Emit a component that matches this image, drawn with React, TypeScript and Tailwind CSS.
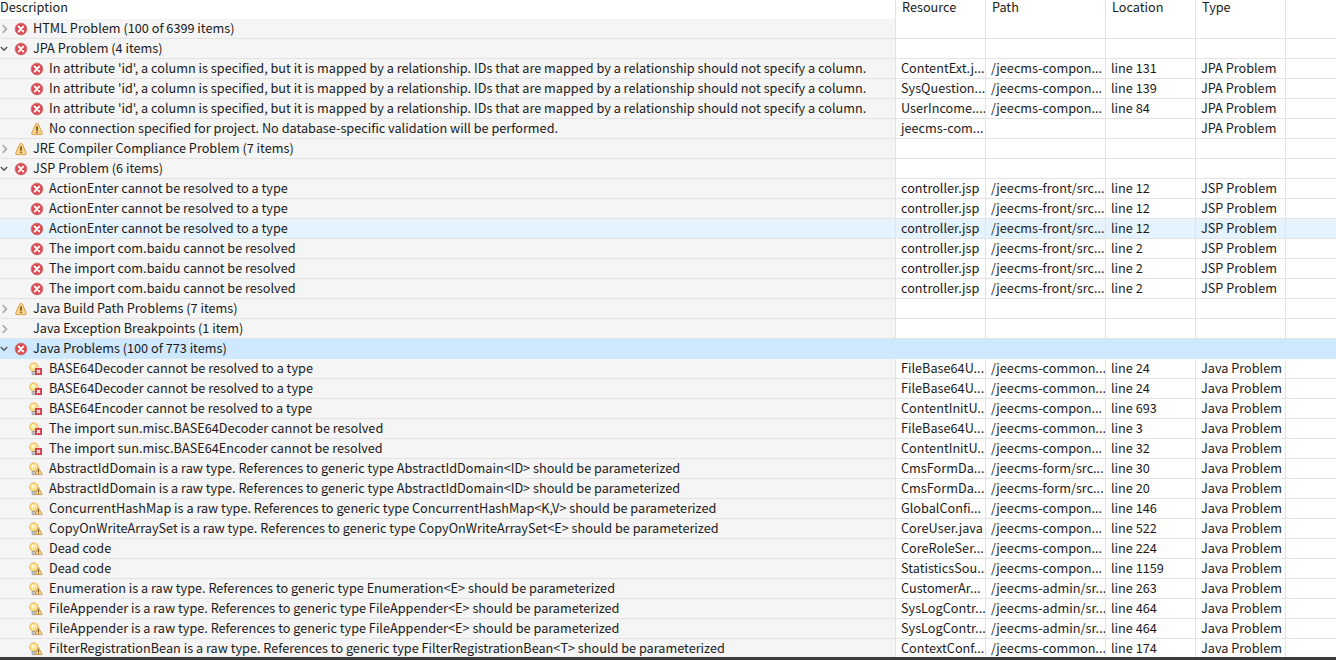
const FONT = "font-['Noto_Sans_CJK_SC','Noto_Sans',sans-serif]";

type Icon = "err" | "warn" | "none" | "berr" | "bwarn";
type Row = {
  d: string;
  icon: Icon;
  r?: string;
  p?: string;
  l?: string;
  t?: string;
  open?: boolean;
  group?: boolean;
  sel?: 1 | 2;
};

const rows: Row[] = [
  { d: "HTML Problem (100 of 6399 items)", icon: "err", group: true },
  { d: "JPA Problem (4 items)", icon: "err", group: true, open: true },
  { d: "In attribute 'id', a column is specified, but it is mapped by a relationship. IDs that are mapped by a relationship should not specify a column.", icon: "err", r: "ContentExt.j...", p: "/jeecms-compon...", l: "line 131", t: "JPA Problem" },
  { d: "In attribute 'id', a column is specified, but it is mapped by a relationship. IDs that are mapped by a relationship should not specify a column.", icon: "err", r: "SysQuestion...", p: "/jeecms-compon...", l: "line 139", t: "JPA Problem" },
  { d: "In attribute 'id', a column is specified, but it is mapped by a relationship. IDs that are mapped by a relationship should not specify a column.", icon: "err", r: "UserIncome....", p: "/jeecms-compon...", l: "line 84", t: "JPA Problem" },
  { d: "No connection specified for project. No database-specific validation will be performed.", icon: "warn", r: "jeecms-com...", t: "JPA Problem" },
  { d: "JRE Compiler Compliance Problem (7 items)", icon: "warn", group: true },
  { d: "JSP Problem (6 items)", icon: "err", group: true, open: true },
  { d: "ActionEnter cannot be resolved to a type", icon: "err", r: "controller.jsp", p: "/jeecms-front/src...", l: "line 12", t: "JSP Problem" },
  { d: "ActionEnter cannot be resolved to a type", icon: "err", r: "controller.jsp", p: "/jeecms-front/src...", l: "line 12", t: "JSP Problem" },
  { d: "ActionEnter cannot be resolved to a type", icon: "err", r: "controller.jsp", p: "/jeecms-front/src...", l: "line 12", t: "JSP Problem", sel: 1 },
  { d: "The import com.baidu cannot be resolved", icon: "err", r: "controller.jsp", p: "/jeecms-front/src...", l: "line 2", t: "JSP Problem" },
  { d: "The import com.baidu cannot be resolved", icon: "err", r: "controller.jsp", p: "/jeecms-front/src...", l: "line 2", t: "JSP Problem" },
  { d: "The import com.baidu cannot be resolved", icon: "err", r: "controller.jsp", p: "/jeecms-front/src...", l: "line 2", t: "JSP Problem" },
  { d: "Java Build Path Problems (7 items)", icon: "warn", group: true },
  { d: "Java Exception Breakpoints (1 item)", icon: "none", group: true },
  { d: "Java Problems (100 of 773 items)", icon: "err", group: true, open: true, sel: 2 },
  { d: "BASE64Decoder cannot be resolved to a type", icon: "berr", r: "FileBase64U...", p: "/jeecms-common...", l: "line 24", t: "Java Problem" },
  { d: "BASE64Decoder cannot be resolved to a type", icon: "berr", r: "FileBase64U...", p: "/jeecms-common...", l: "line 24", t: "Java Problem" },
  { d: "BASE64Encoder cannot be resolved to a type", icon: "berr", r: "ContentInitU...", p: "/jeecms-compon...", l: "line 693", t: "Java Problem" },
  { d: "The import sun.misc.BASE64Decoder cannot be resolved", icon: "berr", r: "FileBase64U...", p: "/jeecms-common...", l: "line 3", t: "Java Problem" },
  { d: "The import sun.misc.BASE64Encoder cannot be resolved", icon: "berr", r: "ContentInitU...", p: "/jeecms-compon...", l: "line 32", t: "Java Problem" },
  { d: "AbstractIdDomain is a raw type. References to generic type AbstractIdDomain<ID> should be parameterized", icon: "bwarn", r: "CmsFormDa...", p: "/jeecms-form/src...", l: "line 30", t: "Java Problem" },
  { d: "AbstractIdDomain is a raw type. References to generic type AbstractIdDomain<ID> should be parameterized", icon: "bwarn", r: "CmsFormDa...", p: "/jeecms-form/src...", l: "line 20", t: "Java Problem" },
  { d: "ConcurrentHashMap is a raw type. References to generic type ConcurrentHashMap<K,V> should be parameterized", icon: "bwarn", r: "GlobalConfi...", p: "/jeecms-compon...", l: "line 146", t: "Java Problem" },
  { d: "CopyOnWriteArraySet is a raw type. References to generic type CopyOnWriteArraySet<E> should be parameterized", icon: "bwarn", r: "CoreUser.java", p: "/jeecms-compon...", l: "line 522", t: "Java Problem" },
  { d: "Dead code", icon: "bwarn", r: "CoreRoleSer...", p: "/jeecms-compon...", l: "line 224", t: "Java Problem" },
  { d: "Dead code", icon: "bwarn", r: "StatisticsSou...", p: "/jeecms-compon...", l: "line 1159", t: "Java Problem" },
  { d: "Enumeration is a raw type. References to generic type Enumeration<E> should be parameterized", icon: "bwarn", r: "CustomerAr...", p: "/jeecms-admin/sr...", l: "line 263", t: "Java Problem" },
  { d: "FileAppender is a raw type. References to generic type FileAppender<E> should be parameterized", icon: "bwarn", r: "SysLogContr...", p: "/jeecms-admin/sr...", l: "line 464", t: "Java Problem" },
  { d: "FileAppender is a raw type. References to generic type FileAppender<E> should be parameterized", icon: "bwarn", r: "SysLogContr...", p: "/jeecms-admin/sr...", l: "line 464", t: "Java Problem" },
  { d: "FilterRegistrationBean is a raw type. References to generic type FilterRegistrationBean<T> should be parameterized", icon: "bwarn", r: "ContextConf...", p: "/jeecms-common...", l: "line 174", t: "Java Problem" },
];

function ErrIcon() {
  return (
    <svg width="14" height="14" viewBox="0 0 14 14" className="shrink-0">
      <circle cx="7" cy="7" r="5.9" fill="#de4a50" stroke="#c9777a" strokeWidth="0.9" />
      <path d="M4.8 4.6 L9.2 9.4 M9.2 4.6 L4.8 9.4" stroke="#fff" strokeWidth="2" strokeLinecap="round" />
    </svg>
  );
}

function WarnIcon() {
  return (
    <svg width="14" height="14" viewBox="0 0 14 14" className="shrink-0">
      <path d="M7 1.2 Q7.9 1.2 8.4 2.2 L12.2 10.8 Q12.8 12.6 11 12.6 L3 12.6 Q1.2 12.6 1.8 10.8 L5.6 2.2 Q6.1 1.2 7 1.2 Z" fill="#f9d58a" stroke="#d9a050" strokeWidth="1" strokeLinejoin="round" />
      <rect x="6.2" y="4.2" width="1.6" height="4.6" rx="0.6" fill="#6e4a1c" />
      <rect x="6.2" y="9.6" width="1.6" height="1.6" rx="0.6" fill="#6e4a1c" />
    </svg>
  );
}

function Bulb({ kind }: { kind: "err" | "warn" }) {
  return (
    <svg width="16" height="16" viewBox="0 0 16 16" className="shrink-0">
      <circle cx="4.9" cy="6.1" r="4.2" fill="#fbe28e" stroke="#e8b54a" strokeWidth="1" />
      <circle cx="4.2" cy="5.2" r="1.8" fill="#fff6cf" />
      <rect x="3" y="10.4" width="3.6" height="3.2" rx="0.6" fill="#c3c7cd" stroke="#868c95" strokeWidth="0.7" />
      {kind === "err" ? (
        <>
          <rect x="6" y="7" width="7" height="7" fill="#d33f4c" />
          <path d="M8 9 L11 12 M11 9 L8 12" stroke="#fff" strokeWidth="1.2" />
        </>
      ) : (
        <>
          <path d="M9.5 6.5 L13.3 13.6 L5.7 13.6 Z" fill="#f9d58a" stroke="#c98f3a" strokeWidth="0.8" strokeLinejoin="round" />
          <rect x="9" y="8.6" width="1" height="2.6" fill="#5e3f16" />
          <rect x="9" y="11.8" width="1" height="1" fill="#5e3f16" />
        </>
      )}
    </svg>
  );
}

function RowIcon({ icon }: { icon: Icon }) {
  if (icon === "err") return <ErrIcon />;
  if (icon === "warn") return <WarnIcon />;
  if (icon === "berr") return <Bulb kind="err" />;
  if (icon === "bwarn") return <Bulb kind="warn" />;
  return <span className="w-[14px] shrink-0" />;
}

function Chevron({ open }: { open?: boolean }) {
  return (
    <svg width="9" height="10" viewBox="0 0 9 10" className="shrink-0">
      {open ? (
        <path d="M0.8 3 L4 6.2 L7.2 3" fill="none" stroke="#555" strokeWidth="1.5" />
      ) : (
        <path d="M2.8 1.2 L6.4 5 L2.8 8.8" fill="none" stroke="#a6a6a6" strokeWidth="1.6" />
      )}
    </svg>
  );
}

function TableRow({ row }: { row: Row }) {
  const bg = row.sel === 2 ? "bg-[#cde8ff]" : row.sel === 1 ? "bg-[#e5f3ff]" : "";
  const descBg = row.sel ? "" : "bg-[#f5f5f5]";
  const line = row.sel === 2 ? "" : "border-b border-[#e3e3e3]";
  const cell = "h-full flex items-start whitespace-nowrap overflow-hidden border-r border-[#e3e3e3] pl-[5px]";
  const bulb = row.icon === "berr" || row.icon === "bwarn";
  return (
    <div className={`flex h-5 shrink-0 ${bg}`}>
      <div className={`w-[896px] shrink-0 h-full flex items-center whitespace-nowrap overflow-hidden border-r border-[#e3e3e3] ${descBg} ${line} ${row.group ? "pl-0" : bulb ? "pl-[29px]" : "pl-[30px]"}`}>
        {row.group ? <Chevron open={row.open} /> : null}
        {row.group ? <span className="w-[5px] shrink-0" /> : null}
        <span className={bulb ? "w-[16px] shrink-0 flex" : "w-[14px] shrink-0 flex"}>
          <RowIcon icon={row.icon} />
        </span>
        <span className={`self-start ${bulb ? "ml-[4px]" : "ml-[5px]"}`}>{row.d}</span>
      </div>
      <div className={`w-[90px] shrink-0 ${cell} ${line}`}>{row.r}</div>
      <div className={`w-[120px] shrink-0 ${cell} ${line}`}>{row.p}</div>
      <div className={`w-[90px] shrink-0 ${cell} ${line}`}>{row.l}</div>
      <div className={`w-[90px] shrink-0 ${cell} ${line}`}>{row.t}</div>
      <div className={`flex-1 h-full ${line}`} />
    </div>
  );
}

export default function App() {
  const head = "shrink-0 h-full pl-[6px] border-r border-[#e3e3e3]";
  return (
    <div className={`w-[1336px] h-[660px] overflow-hidden bg-white flex flex-col text-[12.7px] leading-[18px] text-[#1a1a1a] ${FONT}`}>
      <div className="flex h-[19px] shrink-0 items-start leading-[13px]">
        <div className="w-[896px] shrink-0 h-full border-r border-[#e3e3e3]">Description</div>
        <div className={`w-[90px] ${head}`}>Resource</div>
        <div className={`w-[120px] ${head}`}>Path</div>
        <div className={`w-[90px] ${head}`}>Location</div>
        <div className={`w-[90px] ${head}`}>Type</div>
      </div>
      <div className="flex-1 min-h-0 overflow-hidden flex flex-col">
        {rows.map((r, i) => (
          <TableRow key={i} row={r} />
        ))}
      </div>
      <div className="h-[3px] shrink-0 bg-[#3c3c3c]" />
    </div>
  );
}
